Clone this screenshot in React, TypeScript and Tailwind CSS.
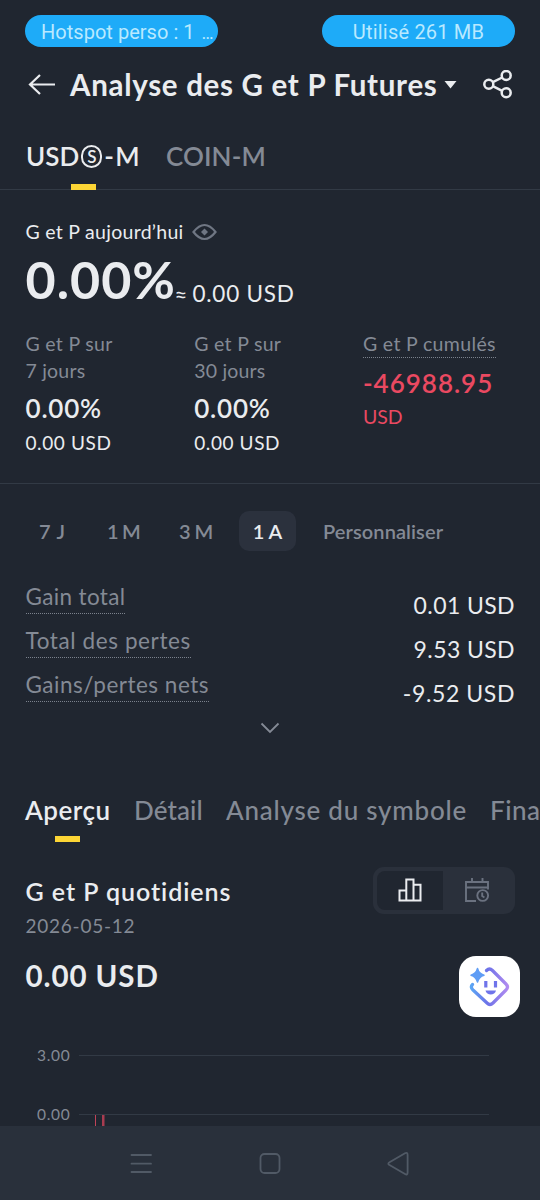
import React from 'react'

type StatProps = {
  label: string
  value: string
  labelClass: string
  valueClass: string
}

const StatRow: React.FC<StatProps> = ({
  label,
  value,
  labelClass,
  valueClass,
}) => {
  return (
    <div className="flex justify-between items-start h-[44.2px]">
      <span
        className={
          'text-[22.5px] leading-8 text-[#848a95] border-b border-dotted border-[#7b828d] ' +
          labelClass
        }
      >
        {label}
      </span>
      <span className={'mt-2 text-[23px] leading-8 ' + valueClass}>
        {value}
      </span>
    </div>
  )
}

const PeriodColumn: React.FC<{ days: string }> = ({ days }) => {
  return (
    <div className="w-[168.7px] flex flex-col">
      <span className="text-[19.5px] leading-[27px] text-[#848a95] tracking-[0.3px]">
        G et P sur
      </span>
      <span className="text-[19.5px] leading-[27px] text-[#848a95] tracking-[0.2px]">
        {days}
      </span>
      <span className="mt-[7px] text-[26px] leading-[34px] font-semibold tracking-[0.8px]">
        0.00%
      </span>
      <span className="mt-[3px] text-[19px] leading-[30px] tracking-[0.6px]">
        0.00 USD
      </span>
    </div>
  )
}

const StatusBar: React.FC = () => {
  return (
    <div className="flex justify-between pt-[15px] pl-[25px] pr-[25px] font-['Roboto',sans-serif] text-[20px] leading-[34px] text-[#b9e9ff]">
      <div className="w-[193px] h-8 rounded-full bg-[#1eabf8] pl-[16px]">
        <span className="tracking-[0.03px]">Hotspot perso : 1</span>
        <span className="ml-[7px] text-[18px]">…</span>
      </div>
      <div className="w-[193px] h-8 rounded-full bg-[#1eabf8] text-center">
        <span className="tracking-[0.2px]">Utilisé 261 MB</span>
      </div>
    </div>
  )
}

const Header: React.FC = () => {
  return (
    <div className="flex items-center h-[76px] pl-[28px] pr-[27px]">
      <svg
        width="28"
        height="24"
        viewBox="0 0 28 24"
        fill="none"
        stroke="currentColor"
        strokeWidth="2.2"
      >
        <path d="M12 2 2 11.5 12 21M2 11.5h25" />
      </svg>
      <h1 className="ml-[14px] w-[367px] text-[29.5px] leading-[40px] font-bold tracking-[0.7px]">
        Analyse des G et P Futures
      </h1>
      <svg className="ml-[7px]" width="13" height="9" viewBox="0 0 13 9">
        <path d="M0.5 0h12L6.5 7.500z" fill="currentColor" />
      </svg>
      <svg
        className="ml-auto"
        width="30"
        height="30"
        viewBox="0 0 30 30"
        fill="none"
        stroke="currentColor"
        strokeWidth="2.5"
      >
        <circle cx="5.8" cy="14.2" r="4.5" />
        <circle cx="23.2" cy="5.500" r="4.500" />
        <circle cx="23.2" cy="22.8" r="4.500" />
        <path d="m9.800 12.200 9.400-4.700M9.800 16.200l9.400 4.700" />
      </svg>
    </div>
  )
}

const MarginTabs: React.FC = () => {
  return (
    <div className="flex h-[67px] pl-[26px] border-b border-[#323a45] text-[26px] leading-[66px]">
      <div className="relative flex items-center w-[115px] h-[66px] font-semibold">
        <span className="leading-[66px]">USD</span>
        <span className="flex items-center justify-center w-[23px] h-[23px] ml-[2px] mr-[2px] rounded-full border-2 border-current text-[17px] leading-none">
          S
        </span>
        <span className="leading-[66px] tracking-[1.3px]">-M</span>
        <div className="absolute left-[45px] -bottom-px w-[25px] h-[6px] bg-[#fcd535]" />
      </div>
      <span className="ml-[25px] text-[#848a95] font-semibold tracking-[0.1px]">
        COIN-M
      </span>
    </div>
  )
}

const Summary: React.FC = () => {
  return (
    <div className="h-[294px] pt-[28px] pl-[25.5px] border-b border-[#323a45]">
      <div className="flex items-center h-[27px] text-[19.5px]">
        <span className="w-[158px] leading-[27px] tracking-[0.28px]">
          G et P aujourd’hui
        </span>
        <svg
          className="ml-[8px]"
          width="25"
          height="18"
          viewBox="0 0 25 18"
          fill="none"
          stroke="#6f7683"
          strokeWidth="2.2"
        >
          <path d="M1.500 9C5 4.500 8.500 2 12.500 2S20 4.500 23.500 9C20 13.500 16.500 16 12.500 16S5 13.500 1.500 9z" />
          <path
            d="m12.500 5.500 3.500 3.500-3.500 3.500L9 9z"
            fill="#6f7683"
            stroke="none"
          />
        </svg>
      </div>
      <div className="flex mt-1 h-[60px]">
        <span className="w-[149px] text-[52px] leading-[61px] font-bold tracking-[1px]">
          0.00%
        </span>
        <span className="w-[18px] mt-[24px] text-[22px] leading-[42px]">≈</span>
        <span className="mt-[24px] text-[22.5px] leading-[42px] tracking-[0.75px]">
          0.00 USD
        </span>
      </div>
      <div className="flex mt-[21px]">
        <PeriodColumn days="7 jours" />
        <PeriodColumn days="30 jours" />
        <div className="flex flex-col items-start">
          <span className="text-[19.5px] leading-[27px] text-[#848a95] border-b border-dotted border-[#7b828d] tracking-[0.35px]">
            G et P cumulés
          </span>
          <span className="mt-[8px] text-[26px] leading-[34px] font-semibold text-[#ea4961] tracking-[1px]">
            -46988.95
          </span>
          <span className="mt-[2px] text-[19.5px] leading-[30px] text-[#ea4961]">
            USD
          </span>
        </div>
      </div>
    </div>
  )
}

const PeriodFilter: React.FC = () => {
  return (
    <div className="flex mt-[27px] h-10 pl-[39px] text-[20px] leading-10 font-semibold text-[#848a95]">
      <span className="w-[68px] tracking-[0.7px]">7 J</span>
      <span className="w-[72px] tracking-[-0.8px]">1 M</span>
      <span className="w-[60px] tracking-[-0.5px]">3 M</span>
      <span className="w-[57px] rounded-[10px] bg-[#2b313d] text-center text-[#eaecef]">
        1 A
      </span>
      <span className="ml-[27px] tracking-[0.1px]">Personnaliser</span>
    </div>
  )
}

const ViewTabs: React.FC = () => {
  return (
    <div className="relative flex mt-[56px] h-[53px] w-full overflow-hidden whitespace-nowrap text-[26px] leading-[43px] font-medium text-[#848a95]">
      <span className="shrink-0 ml-[25px] w-[86px] font-semibold text-[#eaecef] tracking-[0.5px]">
        Aperçu
      </span>
      <span className="shrink-0 ml-[23px] w-[69px] tracking-[0.1px]">
        Détail
      </span>
      <span className="shrink-0 ml-[23px] w-[241px] tracking-[0.75px]">
        Analyse du symbole
      </span>
      <span className="shrink-0 ml-[23px] tracking-[0.5px]">Fina</span>
      <div className="absolute left-[55px] top-[47px] w-[25px] h-[6px] bg-[#fcd535]" />
    </div>
  )
}

const Assistant: React.FC = () => {
  return (
    <div className="absolute right-5 top-[89px] w-[61px] h-[61px] rounded-[17px] bg-white">
      <svg width="61" height="61" viewBox="0 0 61 61" fill="none">
        <defs>
          <linearGradient
            id="face"
            x1="11"
            y1="30"
            x2="50"
            y2="30"
            gradientUnits="userSpaceOnUse"
          >
            <stop offset="0" stopColor="#5aa9f5" />
            <stop offset="0.45" stopColor="#6d72e8" />
            <stop offset="1" stopColor="#b48cf0" />
          </linearGradient>
        </defs>
        <path
          d="M27.500 14.500Q30.500 11.500 33.500 14.500L47 28Q50 31 47 34L34 47Q31 50 28 47L14 34Q11 31 13.500 28.500"
          stroke="url(#face)"
          strokeWidth="3.200"
          strokeLinecap="round"
        />
        <path
          d="M18.500 12.500Q20 18 25 19.200 20 20.500 18.500 26 17 20.500 12 19.200 17 18 18.500 12.500z"
          fill="#5f9df5"
          stroke="#5f9df5"
          strokeWidth="1.500"
          strokeLinejoin="round"
        />
        <path d="M26.800 25v6.500M36.500 25v6.500" stroke="#6f74ea" strokeWidth="3.200" />
        <path d="M26.500 34.500h10.500c-1 5.300-9.500 5.300-10.500 0z" fill="#6f74ea" />
      </svg>
    </div>
  )
}

const DailyPnl: React.FC = () => {
  return (
    <div className="relative flex justify-between mt-[25px] h-[172px] pl-[25.5px] pr-[25px]">
      <div className="flex flex-col">
        <span className="mt-[7px] text-[25px] leading-[34px] font-semibold tracking-[0.95px]">
          G et P quotidiens
        </span>
        <span className="mt-[4px] text-[19px] leading-[28px] text-[#848a95] tracking-[0.75px]">
          2026-05-12
        </span>
        <span className="mt-[15px] text-[29.5px] leading-[41px] font-bold tracking-[0.9px]">
          0.00 USD
        </span>
      </div>
      <div className="flex w-[142px] h-[47px] p-[4px] rounded-[11px] bg-[#2a303b]">
        <div className="flex items-center justify-center w-[66px] h-[39px] rounded-l-[8px] bg-[#202630]">
          <svg
            width="24"
            height="24"
            viewBox="0 0 24 24"
            fill="none"
            stroke="currentColor"
            strokeWidth="2"
          >
            <path d="M1.500 22.500V12.500h6.800v10zM8.300 22.500V1.500h7.200v21zM15.500 22.500V6.800h7v15.700z" />
          </svg>
        </div>
        <div className="flex flex-1 items-center justify-center">
          <svg
            width="26"
            height="26"
            viewBox="0 0 26 26"
            fill="none"
            stroke="#6b7280"
            strokeWidth="1.900"
          >
            <path d="M12 24H2V5h22v5.500H2M8 1v4M18.500 1v4M24 10v2.500" />
            <circle cx="18.700" cy="18.500" r="5.400" />
            <path d="M18.200 15.500v3.500l2.200 1.500" />
          </svg>
        </div>
      </div>
      <Assistant />
    </div>
  )
}

const Chart: React.FC = () => {
  return (
    <div className="h-[87px] overflow-hidden">
      <div className="flex items-center h-[33px] pl-[37px] text-[15.5px] text-[#848a95]">
        <span className="w-[42px] leading-[33px] tracking-[0.7px]">3.00</span>
        <div className="w-[410px] h-px bg-[#323a45]" />
      </div>
      <div className="flex items-center mt-[26px] h-[33px] pl-[37px] text-[15.5px] text-[#848a95]">
        <span className="w-[42px] leading-[33px] tracking-[0.7px]">0.00</span>
        <svg width="410" height="33" viewBox="0 0 410 33">
          <path d="M0 16.500h410" stroke="#323a45" />
          <path d="M16 17h1v16h-1z" fill="#c04358" />
          <path d="M23 17h2.500v16H23z" fill="#a83c50" />
        </svg>
      </div>
    </div>
  )
}

const NavBar: React.FC = () => {
  return (
    <div className="relative flex items-center h-[75px] bg-[#29303b]">
      <svg
        width="540"
        height="75"
        viewBox="0 0 540 75"
        fill="none"
        stroke="#515a66"
        strokeWidth="1.800"
        strokeLinecap="round"
        strokeLinejoin="round"
      >
        <path d="M131.500 29h19.500M131.500 37.700h19.500M131.500 46h19.500" />
        <rect x="260.500" y="28" width="19" height="19" rx="4" />
        <path d="M389.500 36.300 405 27.300Q407.600 26 407.600 29v17.500q0 3-2.600 1.500l-15.500-9q-2.300-1.400 0-2.700z" />
      </svg>
    </div>
  )
}

const App: React.FC = () => {
  return (
    <div className="w-[540px] h-[1200px] overflow-hidden whitespace-nowrap bg-[#202630] text-[#eaecef] font-['Lato',sans-serif]">
      <StatusBar />
      <Header />
      <MarginTabs />
      <Summary />
      <PeriodFilter />
      <div className="mt-[30px] pl-[25.5px] pr-[25px]">
        <StatRow
          label="Gain total"
          value="0.01 USD"
          labelClass="tracking-[0.35px]"
          valueClass="tracking-[0.4px]"
        />
        <StatRow
          label="Total des pertes"
          value="9.53 USD"
          labelClass="tracking-[0.6px]"
          valueClass="tracking-[0.4px]"
        />
        <StatRow
          label="Gains/pertes nets"
          value="-9.52 USD"
          labelClass="tracking-[0.5px]"
          valueClass="tracking-[0.6px]"
        />
      </div>
      <div className="flex justify-center mt-[8px] h-[11px]">
        <svg
          width="20"
          height="12"
          viewBox="0 0 20 12"
          fill="none"
          stroke="#848a95"
          strokeWidth="1.800"
        >
          <path d="m1.500 1.500 8.500 8.500 8.500-8.500" />
        </svg>
      </div>
      <ViewTabs />
      <DailyPnl />
      <Chart />
      <NavBar />
    </div>
  )
}

export default App
